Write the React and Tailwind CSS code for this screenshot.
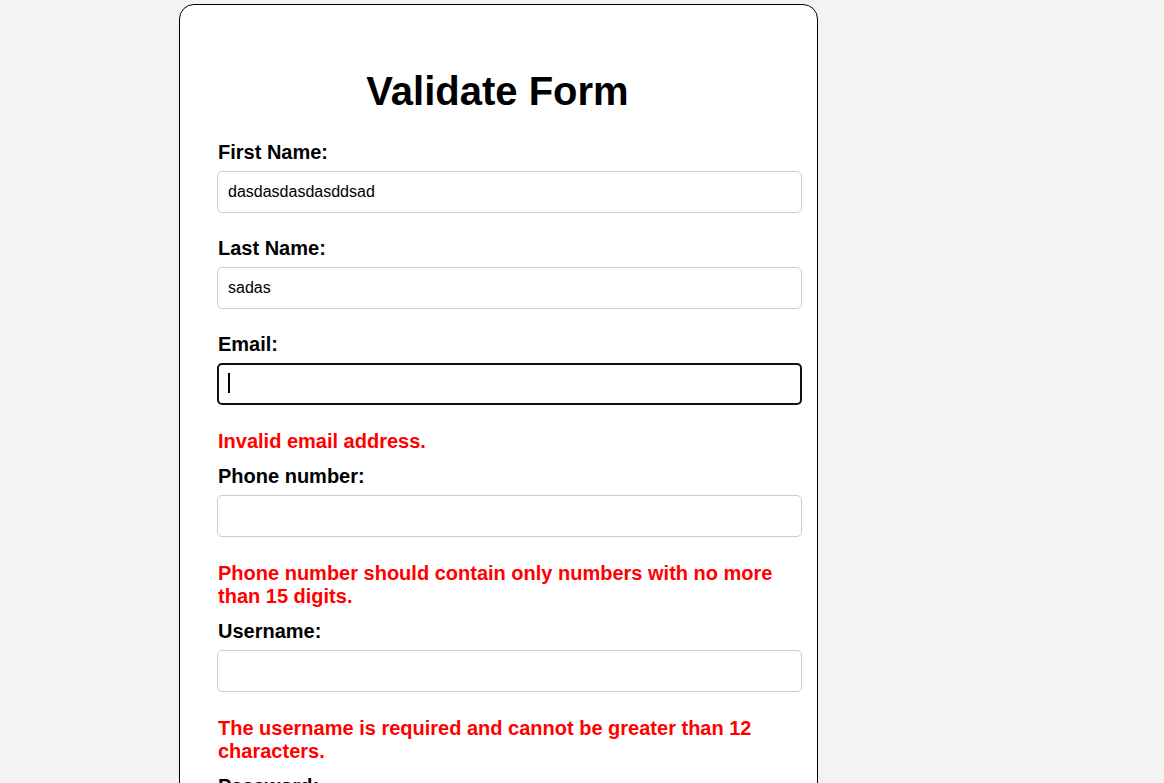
import React, { useState } from 'react';

const fields = [
  { name: 'firstName', label: 'First Name:', value: 'dasdasdasdasddsad' },
  { name: 'lastName', label: 'Last Name:', value: 'sadas' },
  { name: 'email', label: 'Email:', value: '', focused: true, error: 'Invalid email address.' },
  {
    name: 'phone',
    label: 'Phone number:',
    value: '',
    error: 'Phone number should contain only numbers with no more than 15 digits.',
  },
  {
    name: 'username',
    label: 'Username:',
    value: '',
    error: 'The username is required and cannot be greater than 12 characters.',
  },
  { name: 'password', label: 'Password:', value: '', type: 'password' },
  { name: 'confirm', label: 'Confirm Password:', value: '', type: 'password' },
];

const App = () => {
  const [formData, setFormData] = useState(
    Object.fromEntries(fields.map((f) => [f.name, f.value]))
  );

  const handleChange = (e) => {
    setFormData({ ...formData, [e.target.name]: e.target.value });
  };

  return (
    <div className="min-h-screen bg-[#f3f3f3] font-['Liberation_Sans',Arial,sans-serif] text-black overflow-hidden">
      <div className="ml-[179px] pt-[4px] w-[639px]">
        <div className="bg-white border border-black rounded-[15px] pt-[63px] pb-10">
          <h1 className="text-[40px] leading-[46px] font-bold text-center pr-[2px] mb-[27px]">
            Validate Form
          </h1>

          <form className="pl-[37px] pr-[15px]" onSubmit={(e) => e.preventDefault()}>
            {fields.map((f) => (
              <div key={f.name}>
                <div className={f.error ? 'mb-[25px]' : 'mb-[24px]'}>
                  <label
                    htmlFor={f.name}
                    className="block text-[20px] leading-[23px] font-bold mb-[7px] pl-px"
                  >
                    {f.label}
                  </label>
                  <div className="relative">
                    <input
                      id={f.name}
                      name={f.name}
                      type={f.type || 'text'}
                      value={formData[f.name]}
                      onChange={handleChange}
                      className={
                        f.focused
                          ? 'block w-full h-[42px] px-[10px] text-[16px] bg-white rounded-[5px] border-2 border-[#101010] outline-none'
                          : 'block w-full h-[42px] px-[10px] text-[16px] bg-white rounded-[5px] border border-[#cccccc] outline-none'
                      }
                    />
                    {f.focused && (
                      <span className="absolute left-[11px] top-[10px] w-[2px] h-[20px] bg-black" />
                    )}
                  </div>
                </div>
                {f.error && (
                  <p className="text-[20px] leading-[23px] font-bold text-[#ff0000] mb-[12px] pl-px">
                    {f.error}
                  </p>
                )}
              </div>
            ))}
          </form>
        </div>
      </div>
    </div>
  );
};

export default App;
